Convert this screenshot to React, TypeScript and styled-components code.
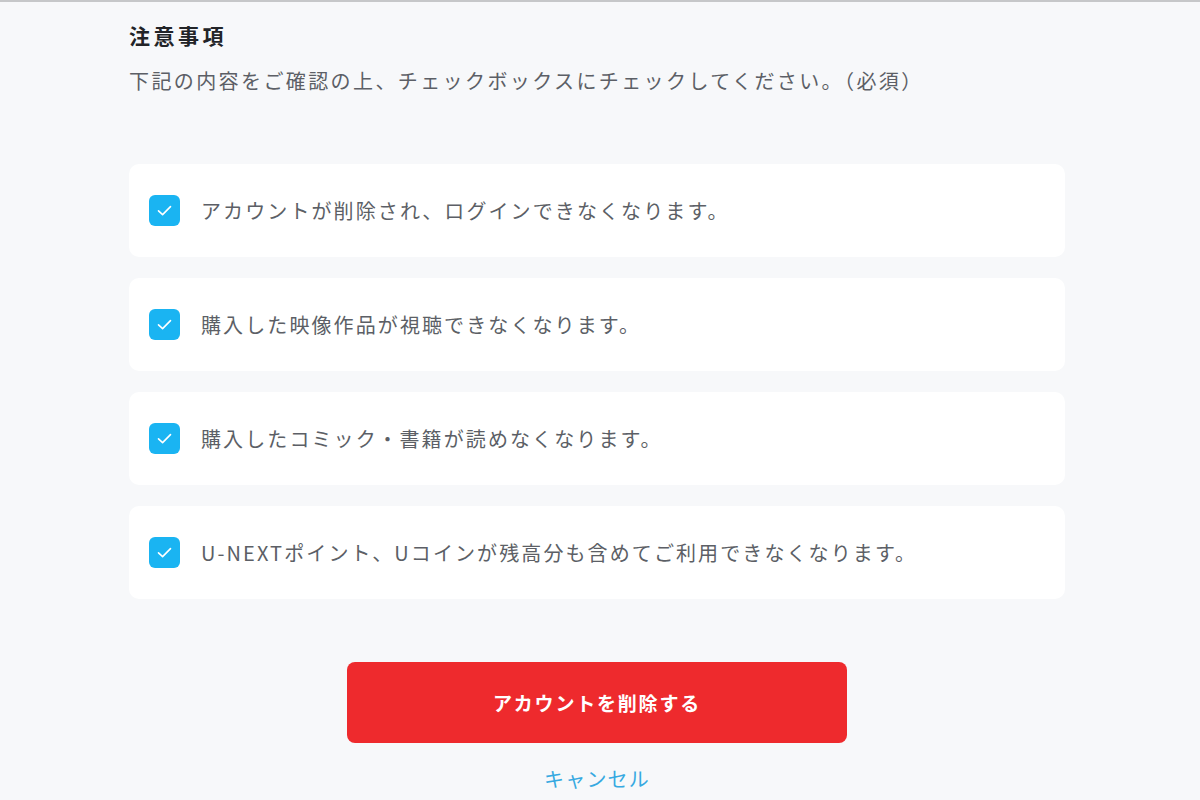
import React, { useState } from 'react';
import styled, { createGlobalStyle } from 'styled-components';

const GlobalStyle = createGlobalStyle`
  html, body {
    margin: 0;
    padding: 0;
    background: #f7f8fa;
  }
  body {
    font-family: "Noto Sans CJK JP", "Noto Sans", sans-serif;
  }
`;

const Page = styled.div`
  min-height: 800px;
  box-sizing: border-box;
  border-top: 2px solid #c6c7c9;
  background: #f7f8fa;
`;

const Content = styled.div`
  width: 936px;
  margin-left: 129px;
  display: flex;
  flex-direction: column;
`;

const Title = styled.h2`
  margin: 18px 0 0;
  font-size: 21px;
  line-height: 30px;
  font-weight: 700;
  letter-spacing: 3.5px;
  color: #222428;
`;

const Lead = styled.p`
  margin: 17px 0 0;
  font-size: 20px;
  line-height: 28px;
  letter-spacing: 2.4px;
  color: #5c5f66;
`;

const List = styled.ul`
  list-style: none;
  margin: 69px 0 0;
  padding: 0;
  display: flex;
  flex-direction: column;
  gap: 21px;
`;

const Card = styled.li`
  height: 93px;
  box-sizing: border-box;
  background: #ffffff;
  border-radius: 10px;
  display: flex;
  align-items: center;
  padding: 0 20px;
  gap: 21px;
  cursor: pointer;
`;

const Box = styled.span<{ $checked: boolean }>`
  width: 31px;
  height: 31px;
  flex: none;
  border-radius: 6px;
  box-sizing: border-box;
  display: flex;
  align-items: center;
  justify-content: center;
  background: ${(p) => (p.$checked ? '#1ab4f2' : '#ffffff')};
  border: ${(p) => (p.$checked ? 'none' : '2px solid #c4c7cc')};
`;

const ItemText = styled.span`
  font-size: 20px;
  line-height: 28px;
  letter-spacing: 2.1px;
  color: #5c5f66;
`;

const Actions = styled.div`
  display: flex;
  flex-direction: column;
  align-items: center;
  margin-top: 63px;
`;

const DeleteButton = styled.button`
  width: 500px;
  height: 81px;
  border: none;
  border-radius: 8px;
  background: #ee2a2d;
  color: #ffffff;
  font-family: inherit;
  font-size: 19px;
  font-weight: 700;
  letter-spacing: 1.8px;
  cursor: pointer;
`;

const CancelLink = styled.a`
  margin-top: 22px;
  font-size: 20px;
  line-height: 28px;
  letter-spacing: 1.2px;
  color: #36a9e1;
  text-decoration: none;
  cursor: pointer;
`;

const notes = [
  'アカウントが削除され、ログインできなくなります。',
  '購入した映像作品が視聴できなくなります。',
  '購入したコミック・書籍が読めなくなります。',
  'U-NEXTポイント、Uコインが残高分も含めてご利用できなくなります。',
];

const CheckIcon = () => (
  <svg width="31" height="31" viewBox="0 0 31 31" fill="none">
    <path d="M9.5 15.8 L13.6 19.6 L21.5 11.6" stroke="#ffffff" strokeWidth="1.6" strokeLinecap="round" strokeLinejoin="round" />
  </svg>
);

const App: React.FC = () => {
  const [checked, setChecked] = useState<boolean[]>(notes.map(() => true));

  const toggle = (i: number) => {
    setChecked(checked.map((c, idx) => (idx === i ? !c : c)));
  };

  return (
    <Page>
      <GlobalStyle />
      <Content>
        <Title>注意事項</Title>
        <Lead>下記の内容をご確認の上、チェックボックスにチェックしてください。（必須）</Lead>
        <List>
          {notes.map((note, i) => (
            <Card key={note} onClick={() => toggle(i)}>
              <Box $checked={checked[i]}>{checked[i] && <CheckIcon />}</Box>
              <ItemText>{note}</ItemText>
            </Card>
          ))}
        </List>
        <Actions>
          <DeleteButton type="button" disabled={!checked.every(Boolean)}>アカウントを削除する</DeleteButton>
          <CancelLink>キャンセル</CancelLink>
        </Actions>
      </Content>
    </Page>
  );
};

export default App;
